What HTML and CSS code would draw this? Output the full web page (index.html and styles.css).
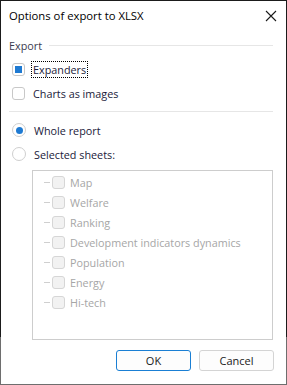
FILE: index.html
```html
<!DOCTYPE html>
<html lang="en">
<head>
    <meta charset="UTF-8">
    <meta name="viewport" content="width=device-width, initial-scale=1.0">
    <title>Options of export to XLSX</title>
    <link rel="stylesheet" href="styles.css">
</head>
<body>
    <div class="dialog">
        <div class="title-bar">
            <span class="title">Options of export to XLSX</span>
            <svg class="close" width="12" height="12" viewBox="0 0 12 12">
                <path d="M1 1 L11 11 M11 1 L1 11" stroke="#1a1a1a" stroke-width="1.1" fill="none"/>
            </svg>
        </div>

        <div class="content">
            <div class="group-head">
                <span>Export</span>
                <div class="group-line"></div>
            </div>

            <label class="option">
                <span class="check checked"></span>
                <span class="focus-text">Expanders</span>
            </label>
            <label class="option">
                <span class="check"></span>
                <span>Charts as images</span>
            </label>

            <div class="separator"></div>

            <label class="option">
                <span class="radio checked"></span>
                <span>Whole report</span>
            </label>
            <label class="option">
                <span class="radio"></span>
                <span>Selected sheets:</span>
            </label>

            <div class="sheet-list">
                <!-- disabled tree of sheets -->
                <div class="sheet"><span class="tree-line"></span><span class="check disabled"></span>Map</div>
                <div class="sheet"><span class="tree-line"></span><span class="check disabled"></span>Welfare</div>
                <div class="sheet"><span class="tree-line"></span><span class="check disabled"></span>Ranking</div>
                <div class="sheet"><span class="tree-line"></span><span class="check disabled"></span>Development indicators dynamics</div>
                <div class="sheet"><span class="tree-line"></span><span class="check disabled"></span>Population</div>
                <div class="sheet"><span class="tree-line"></span><span class="check disabled"></span>Energy</div>
                <div class="sheet"><span class="tree-line"></span><span class="check disabled"></span>Hi-tech</div>
            </div>
        </div>

        <div class="buttons">
            <button class="btn btn-default">OK</button>
            <button class="btn">Cancel</button>
        </div>
    </div>
</body>
</html>
```

FILE: styles.css
```css
/* Global styles */
body {
    margin: 0;
    padding: 0;
    font-family: "Open Sans", "Noto Sans", sans-serif;
    font-size: 10.8px;
    color: #1a1a1a;
    background-color: #ffffff;
}

.dialog {
    box-sizing: border-box;
    width: 287px;
    height: 385px;
    border: 1px solid;
    border-image: linear-gradient(to bottom, #1b1b1b 337px, #6e6e6e 337px) 1;
    background-color: #ffffff;
    display: flex;
    flex-direction: column;
}

.title-bar {
    height: 29px;
    display: flex;
    align-items: center;
    justify-content: space-between;
    padding: 0 9px 0 8px;
}

.title {
    font-size: 11.3px;
    color: #000000;
}

.close {
    display: block;
}

.content {
    padding: 0 13px 0 8px;
    display: flex;
    flex-direction: column;
}

.group-head {
    display: flex;
    align-items: center;
    gap: 7px;
    height: 18px;
    margin-top: 6px;
    color: #3b3b4f;
}

.group-line {
    flex: 1;
    height: 1px;
    background-color: #e6e6e6;
}

.option {
    display: flex;
    align-items: center;
    gap: 8px;
    height: 24px;
    padding-left: 3px;
    color: #1a1a3a;
}

.group-head + .option {
    margin-top: 3px;
}

.focus-text {
    outline: 1px dotted #000000;
    padding: 0 1px;
    margin-left: -1px;
}

.check {
    box-sizing: border-box;
    width: 13px;
    height: 13px;
    border: 1px solid #c8c8c8;
    border-radius: 3px;
    background-color: #ffffff;
    display: flex;
    align-items: center;
    justify-content: center;
    flex-shrink: 0;
}

.check.checked::after {
    content: "";
    width: 7px;
    height: 7px;
    background-color: #1e7ad2;
}

.check.disabled {
    border-color: #d6d6d6;
    background-color: #f2f2f2;
}

.radio {
    box-sizing: border-box;
    width: 14px;
    height: 14px;
    border: 1px solid #cfcfcf;
    border-radius: 50%;
    display: flex;
    align-items: center;
    justify-content: center;
    flex-shrink: 0;
}

.radio.checked::after {
    content: "";
    width: 7px;
    height: 7px;
    border-radius: 50%;
    background-color: #1e7ad2;
}

.separator {
    height: 1px;
    background-color: #e6e6e6;
    margin: 6px 0 6px;
}

.sheet-list {
    box-sizing: border-box;
    height: 170px;
    margin: 4px 0 0 23px;
    border: 1px solid #cdcdcd;
    padding-top: 1px;
}

.sheet {
    display: flex;
    align-items: center;
    height: 20px;
    color: #a6a6a6;
}

.tree-line {
    width: 6px;
    height: 1px;
    background-color: #cfcfcf;
    margin: 0 2px 0 11px;
}

.sheet .check {
    margin-right: 5px;
}

.buttons {
    display: flex;
    justify-content: flex-end;
    gap: 8px;
    padding: 10px 12px 0 0;
}

.btn {
    box-sizing: border-box;
    width: 75px;
    height: 21px;
    font-family: inherit;
    font-size: 11px;
    color: #1a1a1a;
    background-color: #fdfdfd;
    border: 1px solid #d4d4d4;
    border-radius: 3px;
    padding: 0;
    cursor: pointer;
}

.btn-default {
    border-color: #1a7fd4;
}
```
